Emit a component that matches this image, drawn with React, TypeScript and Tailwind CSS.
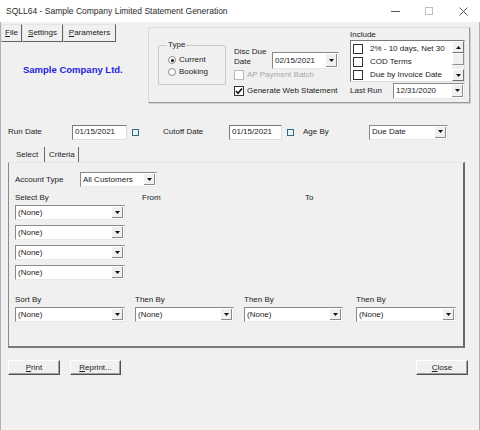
import React from "react"

function Tri({ up = false }: { up?: boolean }) {
  return (
    <svg width="5" height="3" viewBox="0 0 5 3">
      <path d={up ? "M0 3 L2.5 0 L5 3 Z" : "M0 0 L5 0 L2.5 3 Z"} fill="#111" />
    </svg>
  )
}

function Combo({ w, text, h = 15 }: { w: string; text: string; h?: number }) {
  return (
    <div
      className={`${w} flex items-stretch bg-white border border-[#8a8a8a] border-r-[#e8e8e8] border-b-[#e8e8e8] shrink-0`}
      style={{ height: h }}
    >
      <span className="flex-1 pl-[2px] flex items-center whitespace-nowrap overflow-hidden">{text}</span>
      <span className="w-[11px] m-[1px] bg-[#f0f0f0] border-r border-b border-[#8a8a8a] flex items-center justify-center">
        <Tri />
      </span>
    </div>
  )
}

function DateBox({ w, text }: { w: string; text: string }) {
  return (
    <div className={`${w} h-[15px] bg-white border border-[#7a7a7a] border-r-[#dcdcdc] border-b-[#dcdcdc] pl-[2px] flex items-center shrink-0`}>
      {text}
    </div>
  )
}

function Cal() {
  return <span className="w-[7px] h-[7px] border-[1.5px] border-[#2e6f86] bg-[#e8f2f5] shrink-0" />
}

function Box({ checked = false, disabled = false }: { checked?: boolean; disabled?: boolean }) {
  return (
    <span
      className={`w-[10px] h-[10px] bg-white border shrink-0 flex items-center justify-center ${
        disabled ? "border-[#b8b8b8]" : "border-[#333]"
      }`}
    >
      {checked && (
        <svg width="8" height="8" viewBox="0 0 8 8">
          <path d="M1 4 L3 6.2 L7 1.5" stroke="#111" strokeWidth="1.6" fill="none" />
        </svg>
      )}
    </span>
  )
}

function Radio({ on = false }: { on?: boolean }) {
  return (
    <span className="w-[8px] h-[8px] rounded-full bg-white border border-[#8a8a8a] flex items-center justify-center shrink-0">
      {on && <span className="w-[3px] h-[3px] rounded-full bg-[#111]" />}
    </span>
  )
}

function Btn({ first, rest, w }: { first: string; rest: string; w: string }) {
  return (
    <div className={`${w} h-[15px] bg-[#f0f0f0] border border-white border-r-[#505050] border-b-[#505050] shadow-[inset_-1px_-1px_0_#a0a0a0] flex items-center justify-center`}>
      <span className="underline">{first}</span>
      {rest}
    </div>
  )
}

function MenuBtn({ first, rest, w }: { first: string; rest: string; w: string }) {
  return (
    <div className={`${w} h-[18px] bg-[#f0f0f0] border border-[#e4e4e4] border-r-[#606060] border-b-[#606060] flex items-center justify-center`}>
      <span className="underline">{first}</span>
      {rest}
    </div>
  )
}

export default function App() {
  return (
    <div className="w-[480px] h-[430px] bg-[#f0f0f0] overflow-hidden font-['Liberation_Sans',Arial,sans-serif] text-[8px] leading-[10px] text-[#222]">
      {/* title bar */}
      <div className="h-[22px] bg-white flex items-center pl-[6px]">
        <span className="text-[8.5px] text-[#2a2a2a]">SQLL64 - Sample Company Limited Statement Generation</span>
        <div className="ml-auto flex h-full">
          <span className="w-[34px] flex items-center justify-center">
            <span className="w-[9px] h-[1px] bg-[#555]" />
          </span>
          <span className="w-[34px] flex items-center justify-center">
            <span className="w-[8px] h-[8px] border border-[#bdbdbd]" />
          </span>
          <span className="w-[34px] flex items-center justify-center">
            <svg width="9" height="9" viewBox="0 0 9 9">
              <path d="M0.5 0.5 L8.5 8.5 M8.5 0.5 L0.5 8.5" stroke="#555" strokeWidth="1" />
            </svg>
          </span>
        </div>
      </div>

      {/* body */}
      <div className="h-[408px] border-l border-r border-[#b0b0b0] flex flex-col">
        {/* top section */}
        <div className="h-[88px] flex">
          <div className="w-[147px] flex flex-col">
            <div className="flex mt-[2px]">
              <MenuBtn first="F" rest="ile" w="w-[21px]" />
              <MenuBtn first="S" rest="ettings" w="w-[41px]" />
              <MenuBtn first="P" rest="arameters" w="w-[53px]" />
            </div>
            <div className="mt-[22px] pl-[22px] text-[9.5px] leading-[12px] font-bold text-[#2424dc] whitespace-nowrap">
              Sample Company Ltd.
            </div>
          </div>

          <div className="mt-[5px] w-[322px] h-[76px] border border-[#dadada] border-r-[#9a9a9a] border-b-[#9a9a9a] shadow-[1px_1px_0_#d0d0d0] flex">
            {/* Type group */}
            <fieldset className="ml-[9px] mt-[12px] w-[68px] h-[45px] border border-[#c8c8c8] rounded-[2px] pl-[9px]">
              <legend className="px-[1px] ml-[-1px]">Type</legend>
              <div className="flex items-center gap-[3px] h-[12px] mt-[4px]">
                <Radio on />
                <span>Current</span>
              </div>
              <div className="flex items-center gap-[3px] h-[12px]">
                <Radio />
                <span>Booking</span>
              </div>
            </fieldset>

            {/* middle column */}
            <div className="ml-[8px] w-[112px] flex flex-col">
              <div className="mt-[19px] flex items-start">
                <span className="w-[38px]">
                  Disc Due
                  <br />
                  Date
                </span>
                <div className="mt-[5px]">
                  <Combo w="w-[67px]" text="02/15/2021" h={17} />
                </div>
              </div>
              <div className="h-[12px] flex items-center gap-[3px] text-[#a8a8a8] whitespace-nowrap">
                <Box disabled />
                <span>AP Payment Batch</span>
              </div>
              <div className="mt-[4px] h-[12px] flex items-center gap-[3px] whitespace-nowrap">
                <Box checked />
                <span>Generate Web Statement</span>
              </div>
            </div>

            {/* include column */}
            <div className="ml-[4px] w-[115px] flex flex-col">
              <span className="mt-[2px]">Include</span>
              <div className="h-[42px] bg-white border border-[#7a7a7a] border-r-[#dcdcdc] border-b-[#dcdcdc] flex">
                <div className="flex-1 flex flex-col pt-[1px]">
                  {["2% - 10 days, Net 30", "COD Terms", "Due by Invoice Date"].map((t) => (
                    <div key={t} className="h-[13px] flex items-center pl-[2px] whitespace-nowrap">
                      <Box />
                      <span className="ml-[7px]">{t}</span>
                    </div>
                  ))}
                </div>
                <div className="w-[12px] flex flex-col bg-[#f0f0f0]">
                  <span className="h-[12px] bg-[#f0f0f0] border border-white border-r-[#707070] border-b-[#707070] flex items-center justify-center">
                    <Tri up />
                  </span>
                  <span className="h-[12px] border border-white border-r-[#909090] border-b-[#909090]" />
                  <span className="flex-1" />
                  <span className="h-[12px] bg-[#f0f0f0] border border-white border-r-[#707070] border-b-[#707070] flex items-center justify-center">
                    <Tri />
                  </span>
                </div>
              </div>
              <div className="mt-[1px] h-[16px] flex items-center">
                <span className="w-[43px]">Last Run</span>
                <Combo w="w-[72px]" text="12/31/2020" h={16} />
              </div>
            </div>
          </div>
        </div>

        {/* run date row */}
        <div className="mt-[14px] h-[16px] flex items-center pl-[7px]">
          <span className="w-[64px]">Run Date</span>
          <DateBox w="w-[55px]" text="01/15/2021" />
          <span className="ml-[5px] flex"><Cal /></span>
          <span className="ml-[24px] w-[66px]">Cutoff Date</span>
          <DateBox w="w-[53px]" text="01/15/2021" />
          <span className="ml-[5px] flex"><Cal /></span>
          <span className="ml-[9px] w-[66px]">Age By</span>
          <Combo w="w-[79px]" text="Due Date" />
        </div>

        {/* tabs */}
        <div className="mt-[7px] h-[15px] flex items-stretch pl-[12px]">
          <span className="w-[32px] border-r-[1.5px] border-[#6a6a6a] flex items-center pl-[3px]">Select</span>
          <span className="w-[34px] border-r-[1.5px] border-[#6a6a6a] flex items-center pl-[4px]">Criteria</span>
        </div>

        {/* tab panel */}
        <div className="ml-[7px] w-[457px] h-[186px] border border-[#e6e6e6] border-l-[#8a8a8a] border-r-[2px] border-r-[#6a6a6a] border-b-[2px] border-b-[#7a7a7a] flex flex-col pl-[6px]">
          <div className="mt-[9px] h-[15px] flex items-center">
            <span className="w-[65px]">Account Type</span>
            <Combo w="w-[77px]" text="All Customers" />
          </div>
          <div className="mt-[6px] flex">
            <span className="w-[127px]">Select By</span>
            <span className="w-[163px]">From</span>
            <span>To</span>
          </div>
          <div className="mt-[2px] flex flex-col gap-[5px]">
            <Combo w="w-[110px]" text="(None)" />
            <Combo w="w-[110px]" text="(None)" />
            <Combo w="w-[110px]" text="(None)" />
            <Combo w="w-[110px]" text="(None)" />
          </div>
          <div className="mt-[15px] flex">
            <div className="w-[120px] flex flex-col gap-[2px]">
              <span>Sort By</span>
              <Combo w="w-[110px]" text="(None)" />
            </div>
            <div className="w-[109px] flex flex-col gap-[2px]">
              <span>Then By</span>
              <Combo w="w-[99px]" text="(None)" />
            </div>
            <div className="w-[112px] flex flex-col gap-[2px]">
              <span>Then By</span>
              <Combo w="w-[99px]" text="(None)" />
            </div>
            <div className="flex flex-col gap-[2px]">
              <span>Then By</span>
              <Combo w="w-[100px]" text="(None)" />
            </div>
          </div>
        </div>

        {/* buttons */}
        <div className="mt-[12px] flex pl-[7px] pr-[11px]">
          <Btn first="P" rest="rint" w="w-[52px]" />
          <div className="ml-[10px]">
            <Btn first="R" rest="eprint..." w="w-[51px]" />
          </div>
          <div className="ml-auto">
            <Btn first="C" rest="lose" w="w-[52px]" />
          </div>
        </div>
      </div>
    </div>
  )
}
